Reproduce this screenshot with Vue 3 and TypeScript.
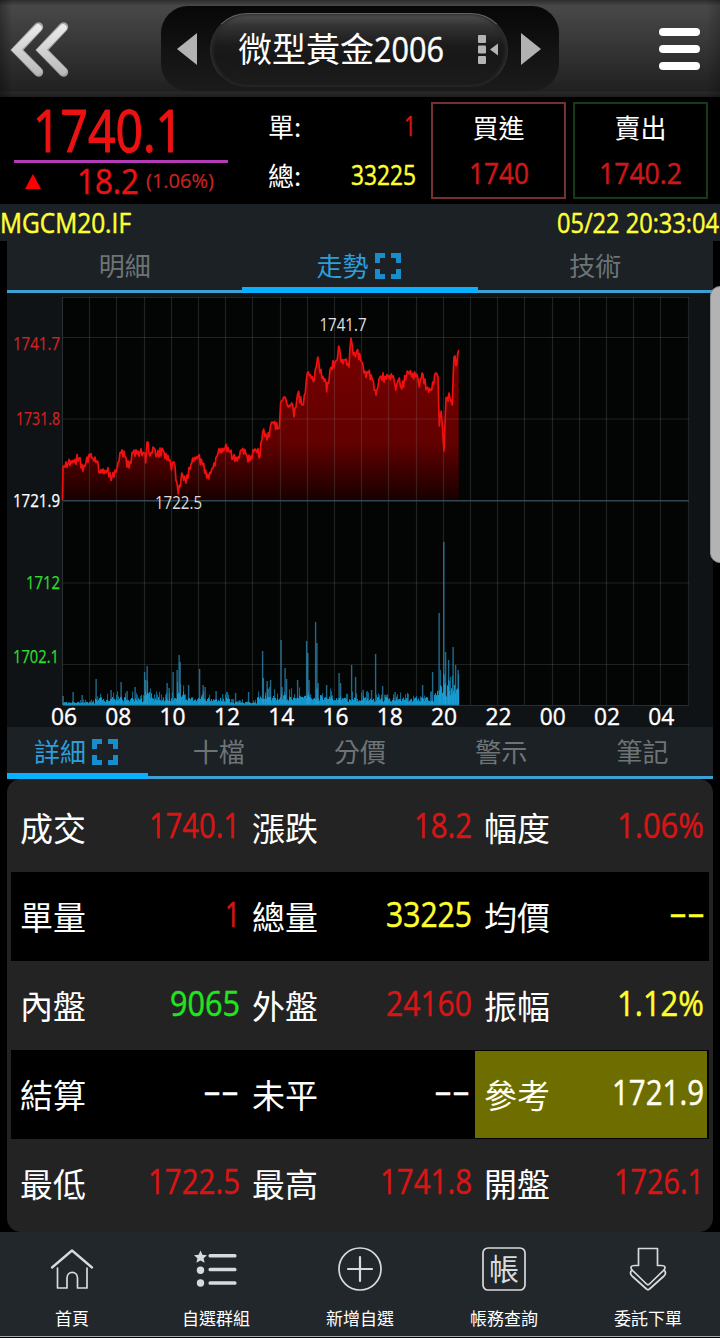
<script setup lang="ts">
import { h } from 'vue'

interface FigureProps { t: string; w: number; s: number; raise?: number }

// Condensed numeric label: the svg box is exactly as tall as the digits.
const Figure = (p: FigureProps) => {
  const height = Math.round(p.s * 0.714)
  return h('svg', { class: 'figure', width: p.w, height }, [
    h('text', {
      x: 0,
      y: height - (p.raise ?? 0),
      'font-size': p.s,
      textLength: p.w,
      lengthAdjust: 'spacingAndGlyphs',
      fill: 'currentColor',
      stroke: 'currentColor',
      'stroke-width': p.s > 50 ? 1.2 : p.s > 24 ? 0.5 : 0.2,
      'stroke-linejoin': 'round',
    }, p.t),
  ])
}
Figure.props = ['t', 'w', 's', 'raise']

interface Cell { label: string; value: string; w: number; tone: string; mark?: boolean; gap?: number }
const rows: Cell[][] = [
  [
    { label: '成交', value: '1740.1', w: 91, tone: 'red' },
    { label: '漲跌', value: '18.2', w: 58, tone: 'red' },
    { label: '幅度', value: '1.06%', w: 87, tone: 'red', gap: 2 },
  ],
  [
    { label: '單量', value: '1', w: 15, tone: 'red' },
    { label: '總量', value: '33225', w: 86, tone: 'yellow' },
    { label: '均價', value: '--', w: 36, tone: 'yellow', gap: 1 },
  ],
  [
    { label: '內盤', value: '9065', w: 70, tone: 'green' },
    { label: '外盤', value: '24160', w: 86, tone: 'red' },
    { label: '振幅', value: '1.12%', w: 87, tone: 'yellow', gap: 2 },
  ],
  [
    { label: '結算', value: '--', w: 36, tone: 'white', gap: 1 },
    { label: '未平', value: '--', w: 36, tone: 'white', gap: 2 },
    { label: '參考', value: '1721.9', w: 92, tone: 'cream', mark: true },
  ],
  [
    { label: '最低', value: '1722.5', w: 92, tone: 'red' },
    { label: '最高', value: '1741.8', w: 92, tone: 'red' },
    { label: '開盤', value: '1726.1', w: 90, tone: 'red', gap: 2 },
  ],
]

const topTabs = ['明細', '走勢', '技術']
const bottomTabs = ['詳細', '十檔', '分價', '警示', '筆記']

// Chart coordinates: origin at the chart's top left corner (706 x 434).
const X0 = 56
const STEP = 27.2
const verticals = Array.from({ length: 24 }, (_, i) => Math.round(X0 + i * STEP) - 0.5)
const horizontals = [4.5, 44.5, 126, 290, 371.5, 412.5]
const priceLabels = [
  { t: '1741.7', x: 6, y: 57, w: 47, c: '#d02222' },
  { t: '1731.8', x: 9, y: 132, w: 44, c: '#d02222' },
  { t: '1721.9', x: 6, y: 214, w: 47, c: '#ffffff' },
  { t: '1712', x: 19, y: 296, w: 34, c: '#2fdd2f' },
  { t: '1702.1', x: 6, y: 370, w: 46, c: '#2fdd2f' },
]
const hourLabels = ['06', '08', '10', '12', '14', '16', '18', '20', '22', '00', '02', '04']
  .map((t, i) => ({ t, x: 44 + i * 54.3 }))

let seed = 71
const rnd = (): number => {
  seed = (seed * 16807) % 2147483647
  return seed / 2147483647
}

const anchors: [number, number][] = [
  [56, 173.5], [61, 171], [72, 165.5], [76, 178], [79, 169], [83, 164], [90, 168], [93, 180], [100, 178], [105, 184],
  [110, 175], [114, 160], [118, 164], [122, 175], [126, 160], [133, 159], [138, 160], [138.7, 170], [140, 149], [143, 163],
  [147, 155], [150, 163], [156, 157], [160, 167], [163, 167], [164.5, 177], [167, 169], [171.3, 201], [174.7, 180], [179, 190],
  [184.7, 170], [191.3, 163], [195.7, 172], [199.7, 185], [206, 175], [211, 160], [218, 155], [223, 159], [226, 166],
  [230.3, 168], [234.7, 157], [239, 161], [243, 168], [248, 156], [253, 163], [255.7, 139], [260.3, 147], [264.7, 129],
  [272.3, 135], [273.7, 109], [278, 104], [281.3, 114], [284.7, 110], [287, 124], [290.7, 101], [296.3, 112], [300.3, 80],
  [307.3, 87], [310.7, 64], [313, 80], [318, 86], [319.7, 99], [323, 77], [328, 69], [330.3, 67], [331.7, 53], [334, 69],
  [338, 67], [342, 74], [344, 45], [346.3, 62], [349.7, 58], [354.7, 69], [357, 80], [361.3, 80], [365.3, 87], [369, 102],
  [373, 84], [381.3, 85], [386.3, 83], [388.7, 97], [391.3, 87], [394.7, 96], [400.3, 78], [404.7, 84], [409.7, 81],
  [412.3, 94], [415, 80], [419.7, 95], [424.7, 97], [428.7, 80], [431, 84], [432.3, 133], [434.3, 118], [437, 158],
  [439, 105], [443, 105], [445.3, 112], [447, 64], [449.7, 72], [451.7, 57],
]
const points: string[] = []
anchors.forEach(([x, y], i) => {
  points.push(`${x},${y}`)
  const next = anchors[i + 1]
  if (!next) return
  let side = 1
  for (let px = x + 1; px < next[0] - 0.6; px += 1) {
    const k = (px - x) / (next[0] - x)
    side = -side
    points.push(`${px.toFixed(1)},${(y + (next[1] - y) * k + side * rnd() * 5).toFixed(1)}`)
  }
})
const line = `55.5,207 ${points.join(' ')}`
const area = `${line} 451.7,207`

const spikes: [number, number][] = [
  [56, 9], [66, 13], [75, 10], [89, 26], [104, 15], [114, 23], [120, 14], [128, 18], [137.5, 33], [138.5, 25], [140, 39], [160, 22],
  [162, 17], [166, 33], [170, 35], [172, 50], [173, 43], [181.5, 20], [192.5, 36], [196, 20], [198, 18], [209, 14], [228.5, 12],
  [241.5, 13], [255.5, 54], [256.3, 27], [260, 24], [263.5, 25], [274, 65], [275, 18], [278, 37], [279.5, 26], [290.5, 25],
  [299.5, 64], [300.7, 52], [302, 25], [308.5, 83], [309.8, 62], [311, 22], [319.5, 20], [332, 32], [333.5, 22], [344.5, 40],
  [348.5, 28], [356, 15], [364.5, 15], [368.5, 51], [375.5, 19], [388, 13], [401, 11], [415.5, 20], [425.5, 33], [432, 92],
  [436.7, 163], [438.5, 53], [441.5, 45], [446, 58], [448.5, 40], [451, 35],
]
const baseLevel = (x: number): number => {
  if (x > 426) return 18
  if (x > 137 && x < 145) return 13
  if (x > 168 && x < 178) return 12
  if (x > 252 && x < 325) return 9
  if (x < 88 || (x > 222 && x < 250)) return 3
  return 7
}
const bars: { x: number; v: number; o: number }[] = []
for (let x = 56; x < 452; x += 1) {
  const b = baseLevel(x)
  bars.push({ x, v: b * (0.45 + rnd() * 0.7), o: 0.9 })
  if (rnd() > 0.7) bars.push({ x, v: b * (1.2 + rnd() * 0.8), o: 0.6 })
}

const nav = [
  { key: 'home', label: '首頁' },
  { key: 'list', label: '自選群組' },
  { key: 'add', label: '新增自選' },
  { key: 'account', label: '帳務查詢' },
  { key: 'order', label: '委託下單' },
]
</script>

<template>
  <main class="app">
    <header class="header">
      <svg class="back" width="62" height="60" viewBox="0 0 62 60">
        <defs>
          <linearGradient id="steel" x1="0" y1="0" x2="0" y2="60" gradientUnits="userSpaceOnUse">
            <stop offset="0" stop-color="#f2f2f2" />
            <stop offset="1" stop-color="#b5b5b5" />
          </linearGradient>
        </defs>
        <g fill="none" stroke-linecap="round" stroke-linejoin="miter">
          <path d="M28.5 8L7 31L28.5 53M53.5 8L32 31L53.5 53" stroke="#a5a5a5" stroke-width="9.5" />
          <path d="M28 9L6.5 31L28 52M53 9L31.5 31L53 52" stroke="url(#steel)" stroke-width="7.5" />
        </g>
      </svg>
      <div class="capsule">
        <svg width="20" height="32" viewBox="0 0 20 32"><path d="M0 16L20 0V32Z" fill="#b2b2b2" /></svg>
        <div class="pill">
          <span class="title">微型黃金</span>
          <Figure t="2006" :w="70" :s="35" />
          <svg class="picker" width="21" height="30" viewBox="0 0 21 30" fill="#b4b4b4">
            <rect width="8" height="8" rx="1" /><rect y="10.5" width="8" height="8" rx="1" />
            <rect y="21" width="8" height="8" rx="1" /><path d="M12 14.5L20 8.5V20.5Z" />
          </svg>
        </div>
        <svg width="20" height="32" viewBox="0 0 20 32"><path d="M20 16L0 0V32Z" fill="#b2b2b2" /></svg>
      </div>
      <div class="menu"><i></i><i></i><i></i></div>
    </header>

    <section class="quote">
      <div class="price">
        <div class="last"><Figure t="1740.1" :w="150" :s="59" /></div>
        <div class="change">
          <svg class="up" width="16" height="15" viewBox="0 0 16 15"><path d="M8 0L16 15H0Z" fill="#f00" /></svg>
          <Figure t="18.2" :w="62" :s="35" />
          <Figure class="pct" t="(1.06%)" :w="68" :s="20" :raise="1" />
        </div>
      </div>
      <div class="volumes">
        <div><span>單:</span><Figure class="red" t="1" :w="12" :s="28" /></div>
        <div><span>總:</span><Figure class="yellow" t="33225" :w="65" :s="28" /></div>
      </div>
      <div class="box buy"><span>買進</span><Figure t="1740" :w="60" :s="30" /></div>
      <div class="box sell"><span>賣出</span><Figure t="1740.2" :w="83" :s="30" /></div>
    </section>

    <div class="strip">
      <Figure t="MGCM20.IF" :w="131" :s="27" />
      <Figure t="05/22 20:33:04" :w="162" :s="27" />
    </div>

    <nav class="tabs">
      <div v-for="(t, i) in topTabs" :key="t" class="tab" :class="{ on: i === 1 }">
        {{ t }}
        <svg v-if="i === 1" class="expand" width="26" height="26" viewBox="0 0 26 26">
          <path d="M2.5 10V2.5H10M16 2.5H23.5V10M23.5 16V23.5H16M10 23.5H2.5V16" />
        </svg>
      </div>
    </nav>

    <svg class="chart" width="706" height="434" viewBox="0 0 706 434">
      <defs>
        <linearGradient id="fall" x1="0" y1="45" x2="0" y2="207" gradientUnits="userSpaceOnUse">
          <stop offset="0" stop-color="#780000" /><stop offset="0.65" stop-color="#620000" />
          <stop offset="1" stop-color="#180000" />
        </linearGradient>
      </defs>
      <rect x="56" y="4" width="626" height="408" fill="#030504" />
      <polygon :points="area" fill="url(#fall)" />
      <g stroke="#8d9694" stroke-opacity=".2" stroke-width="1.2">
        <line v-for="x in verticals" :key="'v' + x" :x1="x" :x2="x" y1="4" y2="412" />
        <line v-for="y in horizontals" :key="'h' + y" x1="56" x2="682" :y1="y" :y2="y" />
      </g>
      <line x1="56" x2="682" y1="207.7" y2="207.7" stroke="#304653" stroke-width="1.6" />
      <rect v-for="(b, i) in bars" :key="'b' + i" :x="b.x" :y="412 - b.v" width="1.1" :height="b.v" fill="#11a5e0" :fill-opacity="b.o" />
      <rect v-for="s in spikes" :key="'s' + s[0]" :x="s[0] - 0.6" :y="412 - s[1]" width="1.4" :height="s[1]" fill="#329bcb" fill-opacity=".67" />
      <rect x="56" y="411" width="396" height="1.4" fill="#168fbe" />
      <polyline :points="line" fill="none" stroke="#ef1010" stroke-width="1.7" stroke-linejoin="round" />
      <g font-size="17.5">
        <text v-for="p in priceLabels" :key="p.t" :x="p.x" :y="p.y" :fill="p.c" :stroke="p.c" stroke-width=".25" :textLength="p.w" lengthAdjust="spacingAndGlyphs">{{ p.t }}</text>
        <text x="312.5" y="38" fill="#e2e2e2" textLength="47" lengthAdjust="spacingAndGlyphs">1741.7</text>
        <text x="148" y="216" fill="#dcdcdc" textLength="47" lengthAdjust="spacingAndGlyphs">1722.5</text>
      </g>
      <g font-size="24.5" fill="#fff" stroke="#fff" stroke-width=".4">
        <text v-for="l in hourLabels" :key="l.t" :x="l.x" y="432" textLength="26" lengthAdjust="spacingAndGlyphs">{{ l.t }}</text>
      </g>
    </svg>

    <nav class="tabs lower">
      <div v-for="(t, i) in bottomTabs" :key="t" class="tab" :class="{ on: i === 0 }">
        {{ t }}
        <svg v-if="i === 0" class="expand" width="26" height="26" viewBox="0 0 26 26">
          <path d="M2.5 10V2.5H10M16 2.5H23.5V10M23.5 16V23.5H16M10 23.5H2.5V16" />
        </svg>
      </div>
    </nav>

    <section class="panel">
      <div v-for="(row, r) in rows" :key="r" class="row">
        <div v-for="c in row" :key="c.label" class="cell" :class="{ mark: c.mark }">
          <span>{{ c.label }}</span>
          <Figure :class="c.tone" :t="c.value" :w="c.w" :s="35" :raise="c.value === '--' ? 2 : 0" :style="{ marginRight: (c.gap ?? 0) + 'px' }" />
        </div>
      </div>
    </section>

    <footer class="dock">
      <div v-for="n in nav" :key="n.key" class="item">
        <svg width="48" height="48" viewBox="0 0 48 48" fill="none" stroke="#d9dadb" stroke-width="1.7" stroke-linecap="round" stroke-linejoin="round">
          <g v-if="n.key === 'home'">
            <path d="M4 22.5L24 5.5L44 22.5" stroke-width="2.3" />
            <path d="M9.5 23V43H19V33C19 25.5 29.5 25.5 29.5 33V43H39V23" />
          </g>
          <g v-else-if="n.key === 'list'" stroke="none" fill="#d9dadb">
            <path d="M8.5 5.5L10.4 9.7L15 10.2L11.6 13.2L12.6 17.8L8.5 15.4L4.4 17.8L5.4 13.2L2 10.2L6.6 9.7Z" />
            <circle cx="8.5" cy="25.3" r="3.7" /><circle cx="8.5" cy="38" r="3.7" />
            <rect x="16.5" y="9" width="28" height="3.6" rx="1.5" />
            <rect x="16.5" y="22.7" width="28" height="3.6" rx="1.5" />
            <rect x="16.5" y="36.2" width="28" height="3.6" rx="1.5" />
          </g>
          <g v-else-if="n.key === 'add'">
            <circle cx="24" cy="24" r="21" /><path d="M12 24H36M24 12V36" stroke-width="2.2" />
          </g>
          <g v-else-if="n.key === 'account'">
            <rect x="3" y="3" width="42" height="42" rx="5" />
            <text x="9" y="34.5" class="ledger" font-size="30" stroke="none" fill="#d9dadb">帳</text>
          </g>
          <g v-else>
            <path d="M14.5 3.5H33.5V20.5H37.5C41 20.5 42 22 40 25L25.5 39Q24 40.5 22.5 39L8 25C6 22 7 20.5 10.5 20.5H14.5Z" />
            <path d="M8 25C6 27 6 29 8 31L22.5 44Q24 45.5 25.5 44L40 31C42 29 42 27 40 25" />
          </g>
        </svg>
        <span>{{ n.label }}</span>
      </div>
    </footer>
    <div class="thumb"></div>
  </main>
</template>

<style>
body { margin: 0; background: #000; }
</style>

<style scoped>
.app {
  position: relative;
  width: 720px;
  height: 1338px;
  overflow: hidden;
  background: #000;
  color: #fff;
  font-family: "Open Sans", "Noto Sans CJK TC", sans-serif;
}
.app svg { display: block; flex: none; overflow: visible; }
.title, .volumes, .box, .tab, .cell, .item, .ledger { font-family: "Noto Sans CJK TC", sans-serif; }
.figure, .chart { font-family: "Open Sans", sans-serif; }
.red { color: #d81515; }
.yellow { color: #ffff2e; }
.green { color: #20e520; }
.cream { color: #fffff0; }

.header {
  box-sizing: border-box;
  height: 97px;
  padding: 0 20px 0 10px;
  display: flex;
  align-items: center;
  background: linear-gradient(90deg, rgba(0,0,0,.3), transparent 12px, transparent 706px, rgba(0,0,0,.2)), linear-gradient(#2d2d2d, #484848 6px, #353535 48px, #202020 91px, #292929 92px, #1d1d1d);
}
.capsule {
  box-sizing: border-box;
  width: 398px;
  height: 85px;
  padding: 0 18px 0 16px;
  margin-left: 89px;
  border-radius: 27px;
  display: flex;
  align-items: center;
  justify-content: space-between;
  background: linear-gradient(#070707, #131313 55%, #1b1b1b);
}
.pill {
  box-sizing: border-box;
  width: 298px;
  height: 74px;
  padding-left: 27px;
  margin-top: 2px;
  border: 1px solid #303030;
  border-top-color: #626262;
  border-bottom-color: #252525;
  border-radius: 37px;
  display: flex;
  align-items: center;
  background: linear-gradient(#505050, #333 12px, #1b1b1b 31px, #171717 60%, #1c1c1c);
  box-shadow: inset -2px 0 3px #292929, inset 2px 0 3px #292929;
}
.title { font-size: 34px; line-height: 40px; margin-bottom: 3px; }
.picker { margin-left: 34px; }
.menu { width: 41px; margin-left: auto; margin-top: 1px; display: flex; flex-direction: column; gap: 9px; }
.menu i { height: 8px; border-radius: 4px; background: #fff; }

.quote { height: 107px; display: flex; }
.price { width: 228px; padding-left: 14px; box-sizing: border-box; color: #ed1212; }
.last { box-sizing: border-box; height: 66px; padding: 13px 0 0 19px; border-bottom: 3px solid #b43bb8; }
.change { display: flex; align-items: center; height: 37px; padding-left: 11px; }
.change .up { margin-right: 36px; }
.pct { margin-left: 7px; color: #c92424; }
.volumes { width: 149px; margin-left: 40px; padding-top: 4px; font-size: 26px; line-height: 49px; }
.volumes div { display: flex; justify-content: space-between; align-items: center; height: 49px; }
.volumes .figure { margin-right: 1px; }
.box {
  box-sizing: border-box;
  width: 135px;
  height: 97px;
  margin: 5px 0 0 14px;
  border: 2px solid #753030;
  display: flex;
  flex-direction: column;
  align-items: center;
  font-size: 26px;
  line-height: 46px;
}
.box .figure { color: #ce1717; margin-top: 13px; }
.box.sell { margin-left: 7px; border-color: #173b17; }

.strip { height: 37px; display: flex; justify-content: space-between; align-items: center; color: #ffff35; background: #1b2125; padding: 1px 1px 0 0; box-sizing: border-box; }
.tabs { display: grid; grid-template-columns: repeat(3, 1fr); height: 52px; margin: 0 7px; background: linear-gradient(transparent 49px, #3e9fd2 49px), #1b2125; }
.tab { box-sizing: border-box; height: 52px; display: flex; justify-content: center; align-items: center; padding-bottom: 5px; font-size: 26px; color: #6e7476; }
.tab.on { color: #2b9edb; border-bottom: 6px solid #08b0ff; padding: 1px 3px 0 0; }
.expand { margin-left: 6px; margin-top: 3px; fill: none; stroke: #178dcc; stroke-width: 5; }
.chart { margin: 0 7px; background: #101316; }
.lower { grid-template-columns: repeat(5, 1fr); }

.panel { box-sizing: border-box; height: 453px; margin: 0 7px; padding: 4px 4px 4px; border-radius: 14px; background: #232323; }
.row { display: grid; grid-template-columns: 232px 232px 234px; height: 89px; }
.row:nth-child(even) { background: #000; }
.cell { box-sizing: border-box; height: 89px; display: flex; align-items: center; justify-content: space-between; padding: 0 3px 0 9px; font-size: 33px; }
.cell > span { margin-bottom: 1px; }
.cell .figure { margin-bottom: 5px; }
.cell.mark { height: 87px; margin: 1px 2px 0 0; padding-right: 3px; background: #6e6d00; }
.cell.mark > span { color: #fffff0; }

.dock { height: 104px; border-bottom: 1px solid #aaa; display: grid; grid-template-columns: repeat(5, 1fr); background: #22272b; }
.item { display: flex; flex-direction: column; align-items: center; padding-top: 13px; font-size: 17px; line-height: 24px; }
.item span { margin-top: 13px; }
.thumb { position: absolute; top: 286px; right: -10px; width: 18px; height: 275px; border: 1px solid #8f8f8f; border-radius: 10px; background: #b3b3b3; }
</style>
